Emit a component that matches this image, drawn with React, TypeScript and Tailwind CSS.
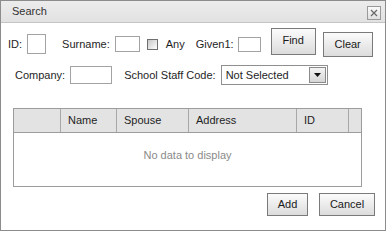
import { ReactNode } from "react";

const Btn = ({ children, className }: { children: ReactNode; className: string }) => (
  <button
    className={`flex items-center justify-center border border-[#7a7a7a] bg-gradient-to-b from-[#fbfbfb] to-[#dcdcdc] text-[11px] text-[#1a1a1a] ${className}`}
  >
    {children}
  </button>
);

const columns = [
  { label: "", w: "w-[47px]" },
  { label: "Name", w: "w-[56px]" },
  { label: "Spouse", w: "w-[72px]" },
  { label: "Address", w: "w-[108px]" },
  { label: "ID", w: "w-[52px]" },
];

export default function App() {
  return (
    <div
      className="w-[386px] h-[231px] border border-[#8c8c8c] bg-white text-[11px] text-[#1e1e1e] flex flex-col"
      style={{ fontFamily: '"Liberation Sans", Arial, sans-serif' }}
    >
      {/* title bar */}
      <div className="h-[22px] shrink-0 flex items-center justify-between bg-gradient-to-b from-[#ececec] to-[#e2e2e2] border-b border-[#c4c4c4] pl-[11px] pr-[4px]">
        <span className="text-[#333]">Search</span>
        <div className="w-[14px] h-[14px] mt-[2px] border border-[#9a9a9a] bg-gradient-to-b from-[#fafafa] to-[#e0e0e0] flex items-center justify-center">
          <svg width="8" height="8" viewBox="0 0 8 8">
            <path d="M1 1 L7 7 M7 1 L1 7" stroke="#6a6a6a" strokeWidth="1.3" />
          </svg>
        </div>
      </div>

      {/* row 1 */}
      <div className="flex items-center h-[32px] mt-[5px] pl-[7px]">
        <span>ID:</span>
        <div className="ml-[5px] w-[19px] h-[20px] border border-[#a3a3a3]" />
        <span className="ml-[16px]">Surname:</span>
        <div className="ml-[5px] w-[25px] h-[16px] border border-[#a3a3a3]" />
        <div className="ml-[7px] w-[11px] h-[11px] border border-[#6f6f6f] bg-gradient-to-br from-[#c8c8c8] to-[#ffffff]" />
        <span className="ml-[8px]">Any</span>
        <span className="ml-[11px]">Given1:</span>
        <div className="ml-[4px] w-[23px] h-[15px] border border-[#a3a3a3]" />
        <Btn className="ml-[10px] w-[45px] h-[27px] self-start pb-[3px]">Find</Btn>
        <Btn className="ml-[7px] w-[50px] h-[25px] mt-[1px]">Clear</Btn>
      </div>

      {/* row 2 */}
      <div className="flex items-center h-[20px] mt-[5px] pl-[14px]">
        <span>Company:</span>
        <div className="ml-[5px] w-[42px] h-[18px] border border-[#a3a3a3]" />
        <span className="ml-[12px]">School Staff Code:</span>
        <div className="ml-[5px] w-[107px] h-[20px] border border-[#8f8f8f] flex items-center justify-between pl-[4px] pr-[1px]">
          <span>Not Selected</span>
          <div className="w-[17px] h-[16px] border border-[#8a8a8a] bg-gradient-to-b from-[#f4f4f4] to-[#d6d6d6] flex items-center justify-center">
            <svg width="7" height="4" viewBox="0 0 7 4">
              <path d="M0 0 H7 L3.5 4 Z" fill="#111" />
            </svg>
          </div>
        </div>
      </div>

      {/* grid */}
      <div className="ml-[12px] mt-[23px] w-[349px] border border-[#9c9c9c]">
        <div className="flex h-[24px] bg-[#e3e3e3] border-b border-[#9c9c9c]">
          {columns.map((c, i) => (
            <div key={i} className={`${c.w} border-r border-[#a8a8a8] flex items-center pl-[7px]`}>
              {c.label}
            </div>
          ))}
          <div className="w-[12px]" />
        </div>
        <div className="h-[53px] pt-[14px] text-center text-[#8a8a8a]">No data to display</div>
      </div>

      {/* bottom buttons */}
      <div className="flex justify-end gap-[11px] mt-[6px] pr-[10px]">
        <Btn className="w-[41px] h-[23px]">Add</Btn>
        <Btn className="w-[56px] h-[23px]">Cancel</Btn>
      </div>
    </div>
  );
}
